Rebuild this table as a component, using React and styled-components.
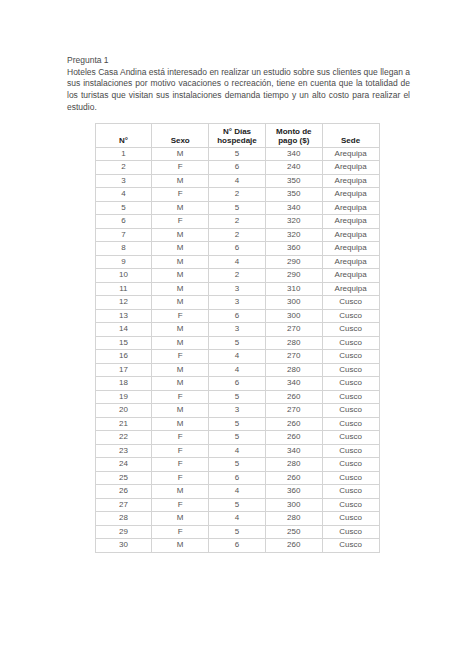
import React from "react";
import styled, { createGlobalStyle } from "styled-components";

const GlobalStyle = createGlobalStyle`
  html, body {
    margin: 0;
    padding: 0;
    background: #fff;
  }
  body {
    font-family: "Liberation Sans", Arial, sans-serif;
  }
`;

const Page = styled.div`
  width: 474px;
  height: 669px;
  box-sizing: border-box;
  padding: 55px 64px 0 67px;
  background: #fff;
`;

const Title = styled.div`
  font-size: 8.5px;
  line-height: 11.7px;
  color: #4a4a4a;
`;

const Paragraph = styled.div`
  font-size: 8.5px;
  line-height: 11.7px;
  color: #4a4a4a;
`;

const Line = styled.span`
  display: block;
  text-align: ${(p) => (p.last ? "left" : "justify")};
  text-align-last: ${(p) => (p.last ? "left" : "justify")};
`;

const TableWrap = styled.div`
  display: flex;
  justify-content: center;
  margin: 9px 0 0 -3px;
`;

const Table = styled.table`
  border-collapse: collapse;
  width: 285px;
  table-layout: fixed;
  font-size: 8px;
  color: #555;
`;

const HeadCell = styled.th`
  border: 1px solid #d4d4d4;
  height: 22px;
  padding: 0 2px 1px;
  vertical-align: bottom;
  font-weight: bold;
  color: #222;
  line-height: 9.5px;
  text-align: center;
`;

const Cell = styled.td`
  border: 1px solid #d4d4d4;
  height: 12.5px;
  padding: 0;
  text-align: center;
  line-height: 12px;
`;

const rows = [
  [1, "M", 5, 340, "Arequipa"],
  [2, "F", 6, 240, "Arequipa"],
  [3, "M", 4, 350, "Arequipa"],
  [4, "F", 2, 350, "Arequipa"],
  [5, "M", 5, 340, "Arequipa"],
  [6, "F", 2, 320, "Arequipa"],
  [7, "M", 2, 320, "Arequipa"],
  [8, "M", 6, 360, "Arequipa"],
  [9, "M", 4, 290, "Arequipa"],
  [10, "M", 2, 290, "Arequipa"],
  [11, "M", 3, 310, "Arequipa"],
  [12, "M", 3, 300, "Cusco"],
  [13, "F", 6, 300, "Cusco"],
  [14, "M", 3, 270, "Cusco"],
  [15, "M", 5, 280, "Cusco"],
  [16, "F", 4, 270, "Cusco"],
  [17, "M", 4, 280, "Cusco"],
  [18, "M", 6, 340, "Cusco"],
  [19, "F", 5, 260, "Cusco"],
  [20, "M", 3, 270, "Cusco"],
  [21, "M", 5, 260, "Cusco"],
  [22, "F", 5, 260, "Cusco"],
  [23, "F", 4, 340, "Cusco"],
  [24, "F", 5, 280, "Cusco"],
  [25, "F", 6, 260, "Cusco"],
  [26, "M", 4, 360, "Cusco"],
  [27, "F", 5, 300, "Cusco"],
  [28, "M", 4, 280, "Cusco"],
  [29, "F", 5, 250, "Cusco"],
  [30, "M", 6, 260, "Cusco"],
];

const App = () => (
  <Page>
    <GlobalStyle />
    <Title>Pregunta 1</Title>
    <Paragraph>
      <Line>Hoteles Casa Andina está interesado en realizar un estudio sobre sus clientes que llegan a</Line>
      <Line>sus instalaciones por motivo vacaciones o recreación, tiene en cuenta que la totalidad de</Line>
      <Line>los turistas que visitan sus instalaciones demanda tiempo y un alto costo para realizar el</Line>
      <Line last>estudio.</Line>
    </Paragraph>
    <TableWrap>
      <Table>
        <thead>
          <tr>
            <HeadCell>N°</HeadCell>
            <HeadCell>Sexo</HeadCell>
            <HeadCell>N° Días hospedaje</HeadCell>
            <HeadCell>Monto de pago ($)</HeadCell>
            <HeadCell>Sede</HeadCell>
          </tr>
        </thead>
        <tbody>
          {rows.map((r) => (
            <tr key={r[0]}>
              {r.map((v, i) => (
                <Cell key={i}>{v}</Cell>
              ))}
            </tr>
          ))}
        </tbody>
      </Table>
    </TableWrap>
  </Page>
);

export default App;
